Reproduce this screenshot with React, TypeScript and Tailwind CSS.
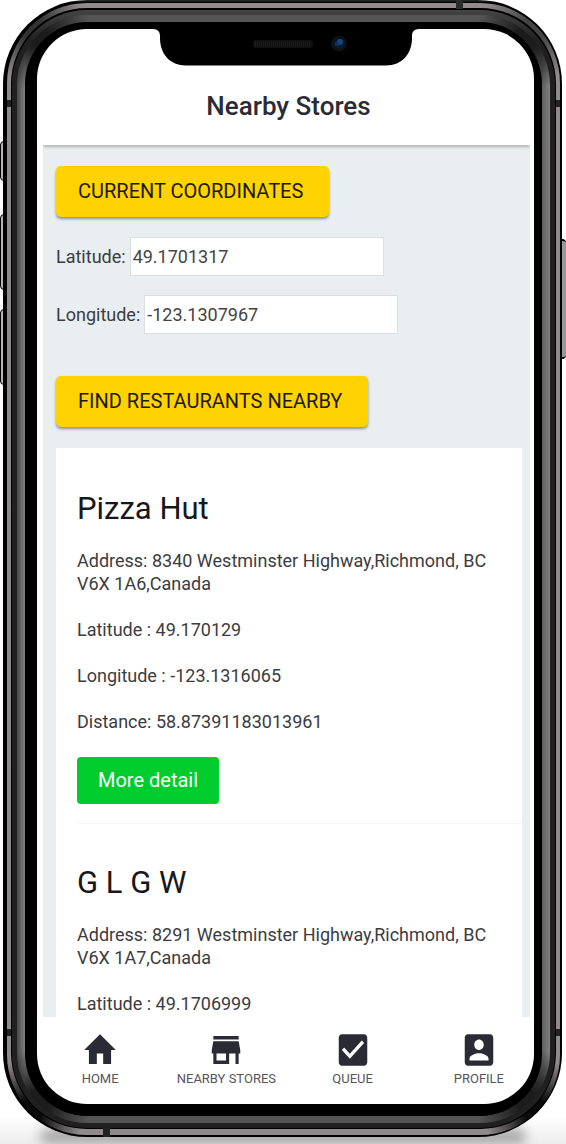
import { useState } from 'react';
import type { ReactNode } from 'react';

type Store = {
  name: string;
  address: string;
  latitude: string;
  longitude?: string;
  distance?: string;
};

const STORES: Store[] = [
  {
    name: 'Pizza Hut',
    address: '8340 Westminster Highway,Richmond, BC V6X 1A6,Canada',
    latitude: '49.170129',
    longitude: '-123.1316065',
    distance: '58.87391183013961',
  },
  {
    name: 'G L G W',
    address: '8291 Westminster Highway,Richmond, BC V6X 1A7,Canada',
    latitude: '49.1706999',
  },
];

const TABS = [
  { label: 'HOME', path: 'M10 20v-6h4v6h5v-8h3L12 3 2 12h3v8z' },
  {
    label: 'NEARBY STORES',
    path: 'M20 4H4v2h16V4zm1 10v-2l-1-5H4l-1 5v2h1v6h10v-6h4v6h2v-6h1zm-9 4H6v-4h6v4z',
  },
  {
    label: 'QUEUE',
    path: 'M19 3H5c-1.11 0-2 .9-2 2v14c0 1.1.89 2 2 2h14c1.11 0 2-.9 2-2V5c0-1.1-.89-2-2-2zm-9 14l-5-5 1.41-1.41L10 14.17l7.59-7.59L19 8l-9 9z',
  },
  {
    label: 'PROFILE',
    path: 'M3 5v14c0 1.1.89 2 2 2h14c1.1 0 2-.9 2-2V5c0-1.1-.9-2-2-2H5c-1.11 0-2 .9-2 2zm12 4c0 1.66-1.34 3-3 3s-3-1.34-3-3 1.34-3 3-3 3 1.34 3 3zm-9 8c0-2 4-3.1 6-3.1s6 1.1 6 3.1v1H6v-1z',
  },
];

function Notch() {
  return (
    <svg
      className="absolute left-1/2 top-0 -translate-x-1/2"
      width="266"
      height="37"
      viewBox="0 0 266 37"
      aria-hidden="true"
    >
      <path d="M0 0H266C261 0 259 3 259 7V9C259 25 249 36.500 233 36.500H33C17 36.500 7 25 7 9V7C7 3 5 0 0 0Z" fill="#000" />
      <rect x="100" y="11" width="60" height="8" rx="3" fill="#101010" />
      <path d="M102 15H158" stroke="#1b1b1b" strokeWidth="6" strokeDasharray="1 1" />
      <circle cx="186" cy="14.500" r="8" fill="#101012" />
      <circle cx="186" cy="14.500" r="5" fill="#08192f" />
      <circle cx="187" cy="13" r="3" fill="#0c4a86" />
      <circle cx="184" cy="15" r="2" fill="#0a3462" />
    </svg>
  );
}

function Phone({ children }: { children: ReactNode }) {
  return (
    <div className="relative h-dvh overflow-hidden bg-white pb-[7px] pl-[3px] pr-1">
      <div className="absolute inset-x-0 bottom-0 h-7 bg-[linear-gradient(to_top,#ececec,#ffffff)]" />
      <div className="absolute bottom-0 left-10 right-10 h-4 rounded-full bg-black/30 blur-[6px]" />
      <div className="absolute left-0 top-[141px] h-10 w-2 rounded-l-sm border border-black bg-[#b5b5b5]" />
      <div className="absolute left-0 top-[214px] h-[76px] w-2 rounded-l-sm border border-black bg-[#b5b5b5]" />
      <div className="absolute left-0 top-[309px] h-[76px] w-2 rounded-l-sm border border-black bg-[#b5b5b5]" />
      <div className="absolute right-0 top-[239px] h-[120px] w-2 rounded-r-sm border-y-2 border-black bg-[#999999]" />
      <div className="relative h-full rounded-[84px] bg-gradient-to-b from-[#2d302d] to-black to-[4px] pb-0.5 pl-1 pr-0.5 pt-[3px]">
        <div className="absolute left-1 right-0.5 top-[100px] z-10 flex h-[7px] justify-between">
          <span className="w-1 bg-[#222222]" />
          <span className="w-1 bg-[#222222]" />
        </div>
        <div className="absolute bottom-[101px] left-1 right-0.5 z-10 flex h-[7px] justify-between">
          <span className="w-1 bg-[#222222]" />
          <span className="w-1 bg-[#222222]" />
        </div>
        <div className="absolute right-[99px] top-0 z-10 h-[9px] w-[7px] bg-[#2b2b2b]" />
        <div className="absolute bottom-0 left-[100px] z-10 h-[9px] w-[7px] bg-[#222222]" />
        <div className="h-full rounded-[80px] bg-[radial-gradient(circle_at_22px_22px,#333333_12px,transparent_54px),radial-gradient(circle_at_calc(100%_-_22px)_22px,#444444_12px,transparent_54px),radial-gradient(circle_at_22px_calc(100%_-_22px),#0a0a0a_12px,transparent_54px),radial-gradient(circle_at_calc(100%_-_22px)_calc(100%_-_22px),#0a0a0a_12px,transparent_54px),linear-gradient(#8f8a8b,#8f8a8b)] px-1 pb-1.5 pt-[5px]">
          <div className="h-full rounded-[76px] bg-black px-px pb-px pt-0.5">
            <div className="h-full rounded-[75px] bg-gradient-to-b from-[#444444] to-[#202020] to-[30px] px-[5px] py-[5px]">
              <div className="h-full rounded-[70px] bg-[radial-gradient(circle_at_20px_20px,#1c1c1c_12px,transparent_54px),radial-gradient(circle_at_calc(100%_-_20px)_20px,#1c1c1c_12px,transparent_54px),radial-gradient(circle_at_20px_calc(100%_-_20px),#1c1c1c_12px,transparent_54px),radial-gradient(circle_at_calc(100%_-_20px)_calc(100%_-_20px),#1c1c1c_12px,transparent_54px),linear-gradient(to_right,#484848_0,#808080_8px,#555555_40px,#555555_calc(100%_-_40px),#606060_calc(100%_-_8px),#808080_100%)] px-2 py-[7px]">
                <div className="h-full rounded-[62px] bg-black pb-3 pl-3 pr-2 pt-[7px]">
                  <div className="relative flex h-full flex-col overflow-hidden rounded-[50px] bg-white">
                    {children}
                    <Notch />
                  </div>
                </div>
              </div>
            </div>
          </div>
        </div>
      </div>
    </div>
  );
}

function YellowButton({ children }: { children: ReactNode }) {
  return (
    <button
      type="button"
      className="block h-[51px] rounded-[5px] bg-[#ffd200] pb-0.5 pl-[22px] pr-[26px] text-xl text-[#1c1a0c] shadow-[0_2px_3px_rgba(0,0,0,0.4)]"
    >
      {children}
    </button>
  );
}

function CoordinateField({ id, label, initial }: { id: string; label: string; initial: string }) {
  const [value, setValue] = useState(initial);
  return (
    <div className="flex items-center gap-1">
      <label htmlFor={id}>{label}</label>
      <input
        id={id}
        value={value}
        onChange={(e) => setValue(e.target.value)}
        className="h-[39px] w-[254px] border border-[#dcdfe2] bg-white px-0.5 text-[#444444] outline-none"
      />
    </div>
  );
}

function StoreItem({ store }: { store: Store }) {
  return (
    <li className="border-[#f6f6f6] pb-[19px] pt-[41px] not-last:border-b">
      <h2 className="mb-[22px] text-[31px] leading-9 text-[#17171c]">{store.name}</h2>
      <div className="space-y-[23px]">
        <p>Address: {store.address}</p>
        <p>Latitude : {store.latitude}</p>
        {store.longitude && <p>Longitude : {store.longitude}</p>}
        {store.distance && <p>Distance: {store.distance}</p>}
      </div>
      {store.distance && (
        <button type="button" className="mt-6 block h-[47px] rounded-[4px] bg-[#00cc2d] px-[21px] pb-px text-xl text-white">
          More detail
        </button>
      )}
    </li>
  );
}

export default function App() {
  return (
    <Phone>
      <div className="flex min-h-0 flex-1 flex-col pl-1.5 pr-1 font-[Roboto,sans-serif]">
        <header className="relative flex h-[116px] shrink-0 items-end justify-center pb-[23px] pl-1 shadow-[0_2px_3px_rgba(0,0,0,0.25)] [clip-path:inset(0_0_-8px_0)]">
          <h1 className="text-[26px] font-medium leading-8 text-[#2b2b36]">Nearby Stores</h1>
        </header>
        <main className="min-h-0 flex-1 overflow-hidden bg-[#e9eef1] pl-[13px] pr-2 pt-[21px] text-lg leading-[23px] text-[#3c3c40]">
          <YellowButton>CURRENT COORDINATES</YellowButton>
          <div className="mb-[42px] mt-5 space-y-[19px]">
            <CoordinateField id="latitude" label="Latitude:" initial="49.1701317" />
            <CoordinateField id="longitude" label="Longitude:" initial="-123.1307967" />
          </div>
          <YellowButton>FIND RESTAURANTS NEARBY</YellowButton>
          <ul className="mt-[21px] bg-white pl-[21px] pt-0.5">
            {STORES.map((store) => (
              <StoreItem key={store.name} store={store} />
            ))}
          </ul>
        </main>
      </div>
      <nav className="-mr-2 grid h-[87px] shrink-0 grid-cols-4 pt-3 font-[Roboto,sans-serif]">
        {TABS.map((tab) => (
          <a key={tab.label} href="#" className="flex flex-col items-center whitespace-nowrap text-[13px] leading-4 text-[#55555c]">
            <svg width="38" height="42" viewBox="0 0 24 24" preserveAspectRatio="none" fill="#2b2b36" aria-hidden="true">
              <path d={tab.path} />
            </svg>
            {tab.label}
          </a>
        ))}
      </nav>
    </Phone>
  );
}
